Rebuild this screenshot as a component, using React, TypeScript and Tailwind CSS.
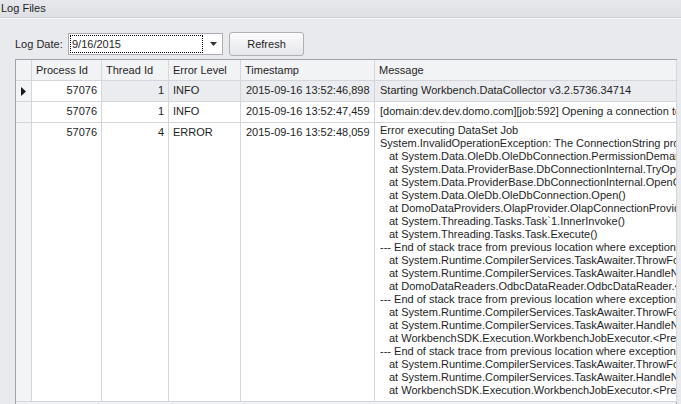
import React from "react";

const msgLines: { t: string; indent?: boolean }[] = [
  { t: "Error executing DataSet Job" },
  { t: "System.InvalidOperationException: The ConnectionString property has not been initialized." },
  { t: "at System.Data.OleDb.OleDbConnection.PermissionDemand()", indent: true },
  { t: "at System.Data.ProviderBase.DbConnectionInternal.TryOpenConnectionInternal()", indent: true },
  { t: "at System.Data.ProviderBase.DbConnectionInternal.OpenConnection()", indent: true },
  { t: "at System.Data.OleDb.OleDbConnection.Open()", indent: true },
  { t: "at DomoDataProviders.OlapProvider.OlapConnectionProvider.Connect()", indent: true },
  { t: "at System.Threading.Tasks.Task`1.InnerInvoke()", indent: true },
  { t: "at System.Threading.Tasks.Task.Execute()", indent: true },
  { t: "--- End of stack trace from previous location where exception was thrown ---" },
  { t: "at System.Runtime.CompilerServices.TaskAwaiter.ThrowForNonSuccess(Task task)", indent: true },
  { t: "at System.Runtime.CompilerServices.TaskAwaiter.HandleNonSuccessAndDebuggerNotification(Task task)", indent: true },
  { t: "at DomoDataReaders.OdbcDataReader.OdbcDataReader.<ReadAsync>d__0.MoveNext()", indent: true },
  { t: "--- End of stack trace from previous location where exception was thrown ---" },
  { t: "at System.Runtime.CompilerServices.TaskAwaiter.ThrowForNonSuccess(Task task)", indent: true },
  { t: "at System.Runtime.CompilerServices.TaskAwaiter.HandleNonSuccessAndDebuggerNotification(Task task)", indent: true },
  { t: "at WorkbenchSDK.Execution.WorkbenchJobExecutor.<PreviewAsync>d__1.MoveNext()", indent: true },
  { t: "--- End of stack trace from previous location where exception was thrown ---" },
  { t: "at System.Runtime.CompilerServices.TaskAwaiter.ThrowForNonSuccess(Task task)", indent: true },
  { t: "at System.Runtime.CompilerServices.TaskAwaiter.HandleNonSuccessAndDebuggerNotification(Task task)", indent: true },
  { t: "at WorkbenchSDK.Execution.WorkbenchJobExecutor.<PreviewAsync>d__1.MoveNext()", indent: true },
];

const cols = "grid grid-cols-[16px_70px_67px_72px_134px_302px]";
const cell = "border-r border-b border-[#d5d6db] overflow-hidden whitespace-nowrap";

function Row({
  focused,
  pid,
  tid,
  level,
  ts,
  children,
  h,
}: {
  focused?: boolean;
  pid: string;
  tid: string;
  level: string;
  ts: string;
  children: React.ReactNode;
  h: string;
}) {
  const bg = focused ? "bg-[#ebecef]" : "bg-white";
  return (
    <div className={`${cols} ${h}`}>
      <div className={`${cell} bg-[#f3f4f6] flex items-start pt-[6px] pl-[5px]`}>
        {focused && (
          <svg width="5" height="9" viewBox="0 0 5 9">
            <path d="M0 0 L5 4.5 L0 9 Z" fill="#1a1a1a" />
          </svg>
        )}
      </div>
      <div className={`${cell} bg-white text-right pr-[4px] pt-[3px]`}>{pid}</div>
      <div className={`${cell} ${bg} text-right pr-[4px] pt-[3px]`}>{tid}</div>
      <div className={`${cell} ${bg} pl-[4px] pt-[3px]`}>{level}</div>
      <div className={`${cell} ${bg} pl-[5px] pt-[3px]`}>{ts}</div>
      <div className={`${cell} ${bg} pl-[5px] pt-[3px]`}>{children}</div>
    </div>
  );
}

export default function App() {
  return (
    <div
      className="w-[681px] h-[404px] overflow-hidden bg-[#e9eaee] text-[11px] leading-[13px] text-[#1e1e1e]"
      style={{ fontFamily: '"Liberation Sans", Arial, sans-serif' }}
    >
      <div className="h-[18px] bg-gradient-to-b from-[#e7e8ec] to-[#dfe0e4] border-b border-[#cfd0d5] pl-[1px] flex items-center">
        <span>Log Files</span>
      </div>
      <div className="h-px bg-[#f6f6f8]" />
      <div className="pl-[15px]">
        <div className="flex items-center h-[24px] mt-[13px]">
          <span className="w-[53px] text-[#1e1e1e]">Log Date:</span>
          <div className="w-[155px] h-[22px] bg-white border border-[#abadb3] flex items-center pl-[1px] pr-[5px]">
            <div className="flex-1 h-[18px] border border-dotted border-black flex items-center pl-[1px]">
              9/16/2015
            </div>
            <svg width="7" height="4" viewBox="0 0 7 4" className="ml-[7px]">
              <path d="M0 0 H7 L3.5 4 Z" fill="#333" />
            </svg>
          </div>
          <div className="ml-[6px] w-[75px] h-[24px] rounded-[3px] border border-[#aeb0b6] bg-gradient-to-b from-[#fbfbfc] to-[#e6e7ea] flex items-center justify-center">
            Refresh
          </div>
        </div>
        <div className="mt-[3px] w-[662px] h-[400px] border-l border-t border-r border-[#a2a3aa] bg-[#f0f1f4]">
          <div className={`${cols} h-[21px] bg-[#f2f3f5]`}>
            <div className={`${cell}`} />
            <div className={`${cell} pl-[4px] pt-[4px]`}>Process Id</div>
            <div className={`${cell} pl-[4px] pt-[4px]`}>Thread Id</div>
            <div className={`${cell} pl-[4px] pt-[4px]`}>Error Level</div>
            <div className={`${cell} pl-[4px] pt-[4px]`}>Timestamp</div>
            <div className={`${cell} pl-[4px] pt-[4px]`}>Message</div>
          </div>
          <Row focused h="h-[21px]" pid="57076" tid="1" level="INFO" ts="2015-09-16 13:52:46,898">
            Starting Workbench.DataCollector v3.2.5736.34714
          </Row>
          <Row h="h-[21px]" pid="57076" tid="1" level="INFO" ts="2015-09-16 13:52:47,459">
            [domain:dev.dev.domo.com][job:592] Opening a connection to the data source
          </Row>
          <Row h="h-[279px]" pid="57076" tid="4" level="ERROR" ts="2015-09-16 13:52:48,059">
            <div className="-mt-[2px]">
              {msgLines.map((l, i) => (
                <div key={i} className={l.indent ? "pl-[9px]" : ""}>
                  {l.t}
                </div>
              ))}
            </div>
          </Row>
        </div>
      </div>
    </div>
  );
}
